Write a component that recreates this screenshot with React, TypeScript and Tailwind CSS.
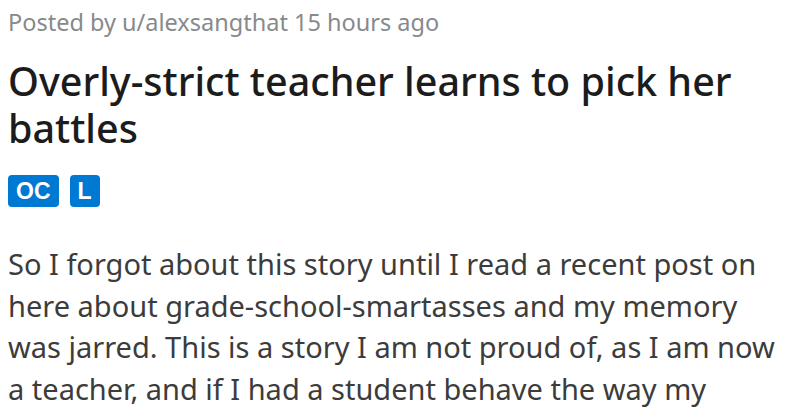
const flairs = ['OC', 'L'];

export default function App() {
  return (
    <div className="w-[800px] h-[420px] overflow-hidden bg-white px-2 pt-[6px]">
      <p className="font-['Noto_Sans',sans-serif] text-[23.5px] leading-[32px] text-[#878a8c]">
        Posted by u/alexsangthat 15 hours ago
      </p>

      <h1 className="mt-[20px] font-['Noto_Sans',sans-serif] text-[39.5px] leading-[47px] font-medium text-[#1c1c1c]">
        Overly-strict teacher learns to pick her
        <br />
        battles
      </h1>

      <div className="mt-[23px] flex gap-[11px]">
        {flairs.map((flair) => (
          <span
            key={flair}
            className="flex h-[32px] items-center rounded-[4px] bg-[#0079d3] px-[8px] font-['Liberation_Sans',sans-serif] text-[23px] font-bold text-white"
          >
            {flair}
          </span>
        ))}
      </div>

      <p className="mt-[36px] font-['Noto_Sans',sans-serif] text-[29px] leading-[41.5px] text-[#3c3c3c]">
        So I forgot about this story until I read a recent post on
        <br />
        here about grade-school-smartasses and my memory
        <br />
        was jarred. This is a story I am not proud of, as I am now
        <br />
        a teacher, and if I had a student behave the way my
      </p>
    </div>
  );
}
